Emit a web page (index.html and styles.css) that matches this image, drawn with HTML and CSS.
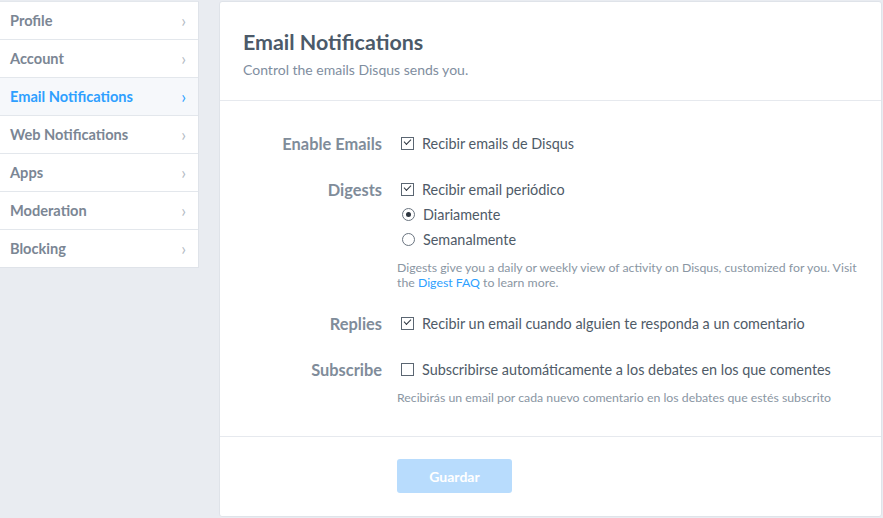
FILE: index.html
```html
<!DOCTYPE html>
<html lang="es">
<head>
  <meta charset="UTF-8">
  <title>Email Notifications</title>
  <link rel="stylesheet" href="styles.css">
</head>
<body>

  <nav class="menu">
    <a class="menu-item">Profile<span class="chev">›</span></a>
    <a class="menu-item">Account<span class="chev">›</span></a>
    <a class="menu-item active">Email Notifications<span class="chev">›</span></a>
    <a class="menu-item">Web Notifications<span class="chev">›</span></a>
    <a class="menu-item">Apps<span class="chev">›</span></a>
    <a class="menu-item">Moderation<span class="chev">›</span></a>
    <a class="menu-item">Blocking<span class="chev">›</span></a>
  </nav>

  <main class="panel">
    <header class="panel-head">
      <h1>Email Notifications</h1>
      <p>Control the emails Disqus sends you.</p>
    </header>

    <section class="panel-body">
      <div class="row">
        <div class="label">Enable Emails</div>
        <div class="controls">
          <div class="opt"><span class="box checked"></span>Recibir emails de Disqus</div>
        </div>
      </div>

      <div class="row">
        <div class="label">Digests</div>
        <div class="controls">
          <div class="opt"><span class="box checked"></span>Recibir email periódico</div>
          <div class="opt"><span class="radio on"></span>Diariamente</div>
          <div class="opt"><span class="radio"></span>Semanalmente</div>
          <p class="help">Digests give you a daily or weekly view of activity on Disqus, customized for you. Visit the <a>Digest FAQ</a> to learn more.</p>
        </div>
      </div>

      <div class="row">
        <div class="label">Replies</div>
        <div class="controls">
          <div class="opt"><span class="box checked"></span>Recibir un email cuando alguien te responda a un comentario</div>
        </div>
      </div>

      <div class="row">
        <div class="label">Subscribe</div>
        <div class="controls">
          <div class="opt"><span class="box"></span>Subscribirse automáticamente a los debates en los que comentes</div>
          <p class="help">Recibirás un email por cada nuevo comentario en los debates que estés subscrito</p>
        </div>
      </div>
    </section>

    <footer class="panel-foot">
      <button class="save">Guardar</button>
    </footer>
  </main>

</body>
</html>
```

FILE: styles.css
```css
body {
  margin: 0;
  padding: 1px 1px 0 0;
  background: #e9ecf1;
  font-family: Lato, "Liberation Sans", sans-serif;
  display: flex;
  align-items: flex-start;
  gap: 20px;
  height: 517px;
  box-sizing: border-box;
  overflow: hidden;
}
.menu {
  width: 198px;
  background: #fff;
  border-top: 1px solid #e3e7ec;
  border-right: 1px solid #dfe3e9;
  border-bottom: 1px solid #dfe3e9;
  display: flex;
  flex-direction: column;
}
.menu-item {
  display: flex;
  justify-content: space-between;
  align-items: center;
  height: 37px;
  padding: 0 12px 0 10px;
  border-bottom: 1px solid #e3e7ec;
  font-size: 14.6px;
  font-weight: 700;
  color: #7b8694;
}
.menu-item:last-child {
  border-bottom: none;
}
.menu-item.active {
  background: #f6f8fb;
  color: #2e9fff;
}
.chev {
  font-size: 17px;
  font-weight: 400;
  color: #b3bbc5;
}
.active .chev {
  color: #2e9fff;
}
.panel {
  flex: 1;
  height: 100%;
  box-sizing: border-box;
  background: #fff;
  border: 1px solid #dfe3e9;
  border-radius: 3px;
  display: flex;
  flex-direction: column;
}
.panel-head {
  padding: 26px 23px 20px;
  border-bottom: 1px solid #e6e9ee;
}
.panel-head h1 {
  margin: 0;
  font-size: 21.4px;
  line-height: 29px;
  font-weight: 700;
  color: #4c5a69;
}
.panel-head p {
  margin: 3px 0 0;
  font-size: 14px;
  line-height: 20px;
  color: #7f8ea0;
}
.panel-body {
  padding: 30px 0 31px;
  border-bottom: 1px solid #e6e9ee;
}
.row {
  display: grid;
  grid-template-columns: 162px 1fr;
  column-gap: 15px;
  margin-bottom: 21px;
}
.row:last-child {
  margin-bottom: 0;
}
.label {
  text-align: right;
  font-size: 16.4px;
  line-height: 25px;
  font-weight: 700;
  color: #808c9a;
}
.opt {
  display: flex;
  align-items: center;
  height: 25px;
  font-size: 14.4px;
  color: #4f5b68;
}
.box, .radio {
  width: 11px;
  height: 11px;
  border: 1px solid #5b6672;
  margin: 0 8px 0 4px;
  flex: none;
  position: relative;
}
.box.checked::after {
  content: "";
  position: absolute;
  left: 2px;
  top: 1px;
  width: 6px;
  height: 3px;
  border-left: 1.5px solid #2e3640;
  border-bottom: 1.5px solid #2e3640;
  transform: rotate(-45deg);
}
.radio {
  border-radius: 50%;
  margin-left: 5px;
  border-color: #6a7480;
}
.radio.on::after {
  content: "";
  position: absolute;
  left: 3px;
  top: 3px;
  width: 5px;
  height: 5px;
  border-radius: 50%;
  background: #2e3640;
}
.help {
  margin: 8px 0 0;
  max-width: 468px;
  font-size: 12.3px;
  line-height: 15px;
  color: #8a96a3;
}
.help a {
  color: #2e9fff;
}
.panel-foot {
  padding: 22px 0 0 177px;
}
.save {
  width: 115px;
  height: 34px;
  border: none;
  border-radius: 3px;
  background: #b8dcfd;
  color: #fff;
  font-family: inherit;
  font-size: 14px;
  font-weight: 700;
}
```
